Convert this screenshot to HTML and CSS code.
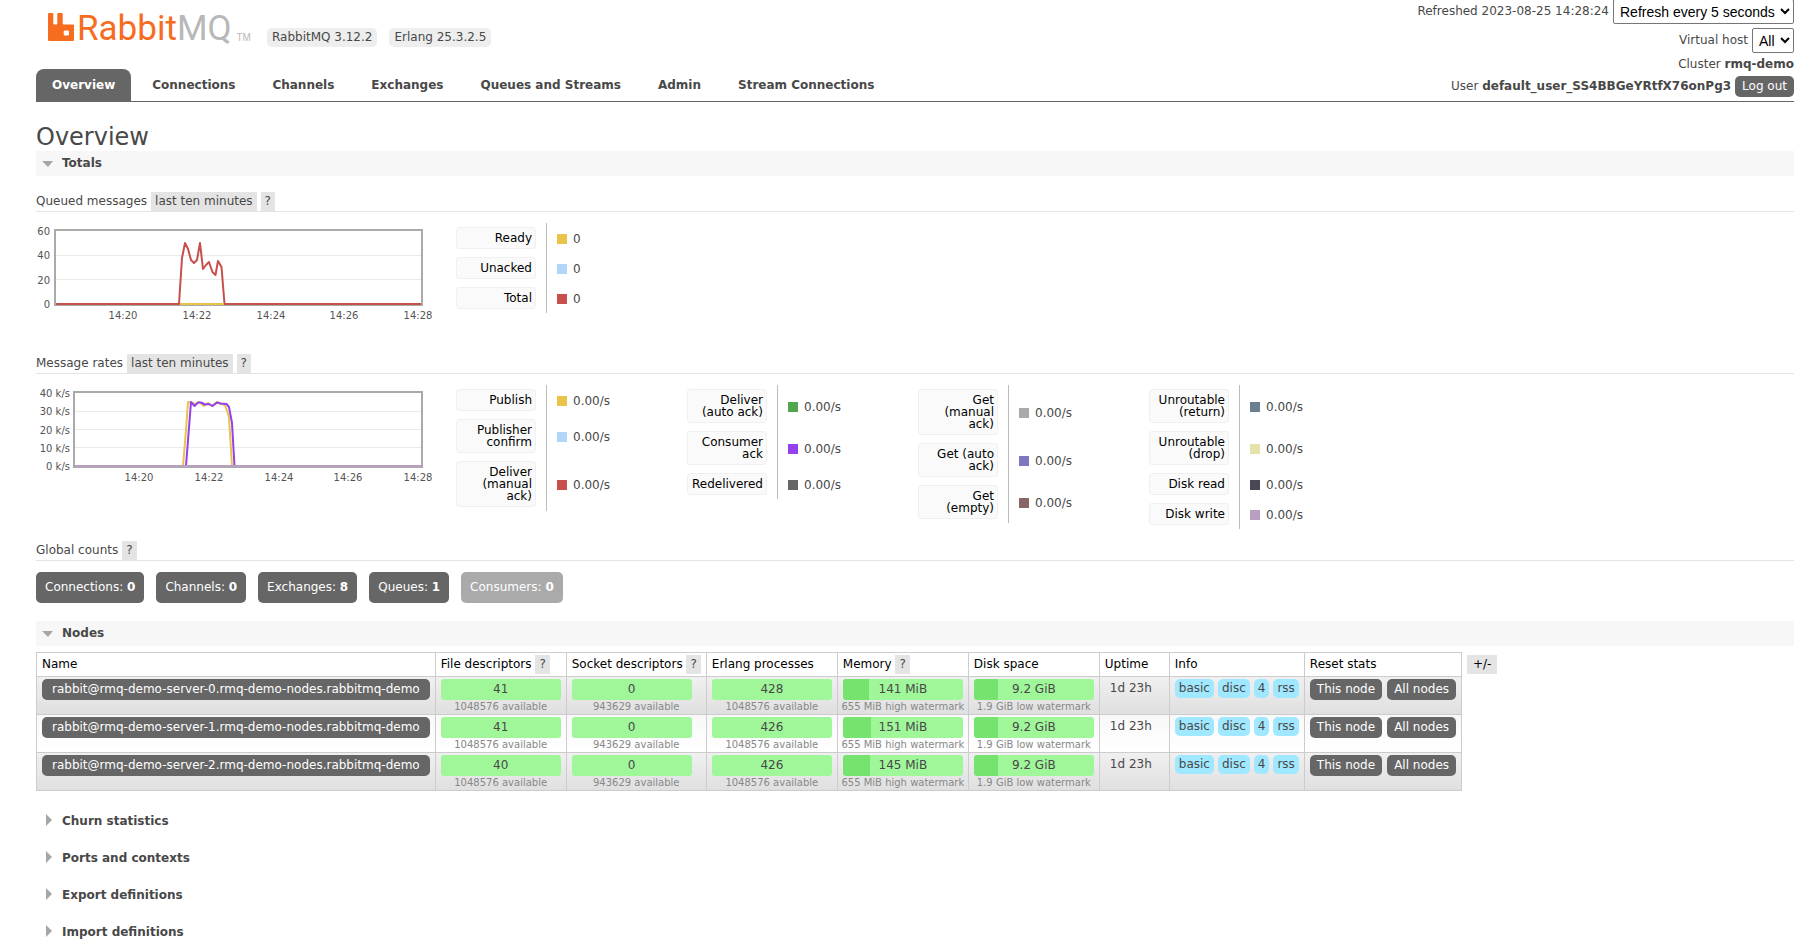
FILE: index.html
```html
<!DOCTYPE html>
<html lang="en">
<head>
<meta charset="utf-8">
<title>RabbitMQ Management</title>
<link rel="stylesheet" href="styles.css">
</head>
<body>
<header class="header">
  <div class="brand-side">
    <div class="brand">
      <a class="logo" href="#" aria-label="RabbitMQ">
        <svg class="logo-mark" width="26" height="28" viewBox="0 0 26 28" aria-hidden="true"><path fill="#f76d1f" fill-rule="evenodd" d="M1 0H4.300Q5.300 0 5.300 1V10.500Q5.300 11.500 6.300 11.500H8.300Q9.300 11.500 9.300 10.500V1Q9.300 0 10.300 0H13.700Q14.700 0 14.700 1V10.500Q14.700 11.500 15.700 11.500H25Q26 11.500 26 12.500V27Q26 28 25 28H1Q0 28 0 27V1Q0 0 1 0ZM16.700 17.500Q15.700 17.500 15.700 18.500V21.500Q15.700 22.500 16.700 22.500H20Q21 22.500 21 21.500V18.500Q21 17.500 20 17.500Z"/></svg>
        <span class="logo-text">Rabbit<span class="logo-mq">MQ</span></span><span class="logo-tm">TM</span>
      </a>
      <span class="version">RabbitMQ 3.12.2</span>
      <span class="version">Erlang 25.3.2.5</span>
    </div>
    <nav class="tabs">
      <a class="tab active" href="#">Overview</a>
      <a class="tab" href="#">Connections</a>
      <a class="tab" href="#">Channels</a>
      <a class="tab" href="#">Exchanges</a>
      <a class="tab" href="#">Queues and Streams</a>
      <a class="tab" href="#">Admin</a>
      <a class="tab" href="#">Stream Connections</a>
    </nav>
  </div>
  <div class="status">
    <div class="status-row"><label for="refresh">Refreshed 2023-08-25 14:28:24</label><select id="refresh" class="select"><option>Refresh every 5 seconds</option></select></div>
    <div class="status-row"><label for="vhost">Virtual host</label><select id="vhost" class="select"><option>All</option></select></div>
    <div class="status-row"><span>Cluster <b>rmq-demo</b></span></div>
    <div class="status-row"><span>User <b>default_user_SS4BBGeYRtfX76onPg3</b></span><button class="btn">Log out</button></div>
  </div>
</header>

<main class="main">
  <h1 class="title">Overview</h1>

  <h2 class="section open">Totals</h2>

  <h3 class="sub first">Queued messages <button class="tag">last ten minutes</button><button class="tag help">?</button></h3>
  <div class="stats">
    <svg class="chart" width="420" height="100" viewBox="36 223 420 100" role="img" aria-label="Queued messages">
      <path class="grid" d="M55 255.500H422M55 279.500H422"/>
      <rect class="frame" x="55" y="230" width="367" height="75"/>
      <path class="line red" d="M56 304H179L182 258L185 243L188 249L191 260L194 263L197 260L200 243L203 269L206 265L209 262L212.500 272L215.500 275L218 261L221.500 267L224.500 304H421"/>
      <path class="line yellow" d="M180 304H224"/>
      <g class="ylabels"><text x="50" y="235">60</text><text x="50" y="259">40</text><text x="50" y="284">20</text><text x="50" y="308">0</text></g>
      <g class="xlabels"><text x="123" y="319">14:20</text><text x="197" y="319">14:22</text><text x="271" y="319">14:24</text><text x="344" y="319">14:26</text><text x="418" y="319">14:28</text></g>
    </svg>
    <div class="legends">
      <table class="legend">
        <tr><th><button class="key">Ready</button></th><td><i class="sw" style="background:#e9c34a"></i>0</td></tr>
        <tr><th><button class="key">Unacked</button></th><td><i class="sw" style="background:#b2d6f7"></i>0</td></tr>
        <tr><th><button class="key">Total</button></th><td><i class="sw" style="background:#c74f4c"></i>0</td></tr>
      </table>
    </div>
  </div>

  <h3 class="sub">Message rates <button class="tag">last ten minutes</button><button class="tag help">?</button></h3>
  <div class="stats">
    <svg class="chart" width="420" height="100" viewBox="36 385 420 100" role="img" aria-label="Message rates">
      <path class="grid" d="M74 411.500H422M74 429.500H422M74 447.500H422"/>
      <rect class="frame" x="74" y="392" width="348" height="75"/>
      <path class="line yellow" d="M183 466L186 430L188 402L192 403L196 404L199 402L204 406L208 403L212 406L217 402L221 404L225 405L229 417L232 466"/>
      <path class="line purple" d="M186 466L191 402L194.500 406L198 402.500L201 402.500L205 404.500L209 404L212.500 406L217 402.500L220.500 403.500L226.500 404L229 407L232 423L234.500 466"/>
      <path class="line mauve" d="M75 466H421"/>
      <g class="ylabels"><text x="70" y="397">40 k/s</text><text x="70" y="415">30 k/s</text><text x="70" y="434">20 k/s</text><text x="70" y="452">10 k/s</text><text x="70" y="470">0 k/s</text></g>
      <g class="xlabels"><text x="139" y="481">14:20</text><text x="209" y="481">14:22</text><text x="279" y="481">14:24</text><text x="348" y="481">14:26</text><text x="418" y="481">14:28</text></g>
    </svg>
    <div class="legends">
      <table class="legend">
        <tr><th><button class="key">Publish</button></th><td><i class="sw" style="background:#e9c34a"></i>0.00/s</td></tr>
        <tr><th><button class="key">Publisher confirm</button></th><td><i class="sw" style="background:#b2d6f7"></i>0.00/s</td></tr>
        <tr><th><button class="key">Deliver (manual ack)</button></th><td><i class="sw" style="background:#c74f4c"></i>0.00/s</td></tr>
      </table>
      <table class="legend">
        <tr><th><button class="key">Deliver (auto ack)</button></th><td><i class="sw" style="background:#52a64f"></i>0.00/s</td></tr>
        <tr><th><button class="key">Consumer ack</button></th><td><i class="sw" style="background:#9440ed"></i>0.00/s</td></tr>
        <tr><th><button class="key">Redelivered</button></th><td><i class="sw" style="background:#666"></i>0.00/s</td></tr>
      </table>
      <table class="legend">
        <tr><th><button class="key">Get (manual ack)</button></th><td><i class="sw" style="background:#aaa"></i>0.00/s</td></tr>
        <tr><th><button class="key">Get (auto ack)</button></th><td><i class="sw" style="background:#8077c1"></i>0.00/s</td></tr>
        <tr><th><button class="key">Get (empty)</button></th><td><i class="sw" style="background:#8b6666"></i>0.00/s</td></tr>
      </table>
      <table class="legend">
        <tr><th><button class="key">Unroutable (return)</button></th><td><i class="sw" style="background:#6b7f90"></i>0.00/s</td></tr>
        <tr><th><button class="key">Unroutable (drop)</button></th><td><i class="sw" style="background:#e6e2ac"></i>0.00/s</td></tr>
        <tr><th><button class="key">Disk read</button></th><td><i class="sw" style="background:#4a4857"></i>0.00/s</td></tr>
        <tr><th><button class="key">Disk write</button></th><td><i class="sw" style="background:#b99fc1"></i>0.00/s</td></tr>
      </table>
    </div>
  </div>

  <h3 class="sub">Global counts <button class="tag help">?</button></h3>
  <div class="counts">
    <a class="count" href="#">Connections: <b>0</b></a>
    <a class="count" href="#">Channels: <b>0</b></a>
    <a class="count" href="#">Exchanges: <b>8</b></a>
    <a class="count" href="#">Queues: <b>1</b></a>
    <span class="count disabled">Consumers: <b>0</b></span>
  </div>

  <h2 class="section open">Nodes</h2>
  <div class="nodes-wrap">
    <table class="nodes">
      <thead>
        <tr>
          <th>Name</th>
          <th>File descriptors <button class="tag">?</button></th>
          <th>Socket descriptors <button class="tag">?</button></th>
          <th>Erlang processes</th>
          <th>Memory <button class="tag">?</button></th>
          <th>Disk space</th>
          <th>Uptime</th>
          <th>Info</th>
          <th>Reset stats</th>
        </tr>
      </thead>
      <tbody>
        <tr>
          <td><a class="btn node" href="#">rabbit@rmq-demo-server-0.rmq-demo-nodes.rabbitmq-demo</a></td>
          <td><div class="bar">41</div><small class="note">1048576 available</small></td>
          <td><div class="bar">0</div><small class="note">943629 available</small></td>
          <td><div class="bar">428</div><small class="note">1048576 available</small></td>
          <td><div class="bar" style="--fill:26px">141 MiB</div><small class="note">655 MiB high watermark</small></td>
          <td><div class="bar" style="--fill:24px">9.2 GiB</div><small class="note">1.9 GiB low watermark</small></td>
          <td class="uptime">1d 23h</td>
          <td><div class="pills"><span class="pill">basic</span><span class="pill">disc</span><span class="pill">4</span><span class="pill">rss</span></div></td>
          <td><div class="pills reset"><button class="btn">This node</button><button class="btn">All nodes</button></div></td>
        </tr>
        <tr>
          <td><a class="btn node" href="#">rabbit@rmq-demo-server-1.rmq-demo-nodes.rabbitmq-demo</a></td>
          <td><div class="bar">41</div><small class="note">1048576 available</small></td>
          <td><div class="bar">0</div><small class="note">943629 available</small></td>
          <td><div class="bar">426</div><small class="note">1048576 available</small></td>
          <td><div class="bar" style="--fill:28px">151 MiB</div><small class="note">655 MiB high watermark</small></td>
          <td><div class="bar" style="--fill:24px">9.2 GiB</div><small class="note">1.9 GiB low watermark</small></td>
          <td class="uptime">1d 23h</td>
          <td><div class="pills"><span class="pill">basic</span><span class="pill">disc</span><span class="pill">4</span><span class="pill">rss</span></div></td>
          <td><div class="pills reset"><button class="btn">This node</button><button class="btn">All nodes</button></div></td>
        </tr>
        <tr>
          <td><a class="btn node" href="#">rabbit@rmq-demo-server-2.rmq-demo-nodes.rabbitmq-demo</a></td>
          <td><div class="bar">40</div><small class="note">1048576 available</small></td>
          <td><div class="bar">0</div><small class="note">943629 available</small></td>
          <td><div class="bar">426</div><small class="note">1048576 available</small></td>
          <td><div class="bar" style="--fill:27px">145 MiB</div><small class="note">655 MiB high watermark</small></td>
          <td><div class="bar" style="--fill:24px">9.2 GiB</div><small class="note">1.9 GiB low watermark</small></td>
          <td class="uptime">1d 23h</td>
          <td><div class="pills"><span class="pill">basic</span><span class="pill">disc</span><span class="pill">4</span><span class="pill">rss</span></div></td>
          <td><div class="pills reset"><button class="btn">This node</button><button class="btn">All nodes</button></div></td>
        </tr>
      </tbody>
    </table>
    <button class="tag columns">+/-</button>
  </div>

  <h2 class="section closed">Churn statistics</h2>
  <h2 class="section closed">Ports and contexts</h2>
  <h2 class="section closed">Export definitions</h2>
  <h2 class="section closed last">Import definitions</h2>
</main>
</body>
</html>
```

FILE: styles.css
```css
* { box-sizing: border-box; }

body {
  margin: 0;
  padding: 0 7px 0 36px;
  background: #fff;
  color: #484848;
  font: 12px/19px Verdana, "DejaVu Sans", sans-serif;
}

a { color: inherit; text-decoration: none; }
button { border: 0; margin: 0; font: inherit; color: inherit; cursor: pointer; }

/* Header */
.header {
  display: flex;
  justify-content: space-between;
  border-bottom: 1px solid #666;
}
.brand-side { display: flex; flex-direction: column; justify-content: space-between; }
.brand { display: flex; align-items: flex-start; padding: 13px 0 0 12px; gap: 12px; }
.logo { display: flex; align-items: flex-start; margin-right: 4px; height: 40px; }
.logo-text { margin-left: 3px; color: #f76d1f; font: 400 35px/31px Roboto, sans-serif; }
.logo-mq { color: #b8b8b8; }
.logo-tm { margin: 20px 0 0 5px; color: #b8b8b8; font: 10px/10px "Liberation Sans", Arial, sans-serif; }
.version {
  margin-top: 15px;
  padding: 0 5px;
  border-radius: 5px;
  background: #eee;
}
.tabs { display: flex; gap: 5px; }
.tab {
  padding: 7px 16px 6px;
  border-radius: 8px 8px 0 0;
  font-weight: bold;
}
.tab.active { background: #666; color: #fff; }

.status { display: flex; flex-direction: column; align-items: flex-end; margin-top: -1px; padding-bottom: 4px; }
.status-row { display: flex; align-items: center; gap: 4px; min-height: 21px; }
.status-row:first-child { margin-bottom: 4px; }
.status-row:nth-child(3) { min-height: 23px; }
.select {
  height: 25px;
  padding: 0 2px;
  border: 1px solid #767676;
  border-radius: 2px;
  background-color: #fff;
  color: #000;
  font: 14px "Liberation Sans", Arial, sans-serif;
}

.btn {
  display: inline-block;
  padding: 0 7px;
  border-radius: 5px;
  background: #666;
  color: #fff;
  line-height: 21px;
  white-space: nowrap;
}
.btn.node { padding: 0 10px; }

/* Sections */
.title { margin: 21px 0 0; font-size: 24px; font-weight: normal; line-height: 28px; }
.section {
  display: flex;
  align-items: center;
  margin: 0;
  font-size: 12px;
  line-height: 25px;
}
.section::before { content: ""; border: 0 solid transparent; }
.section.open { background: #f7f7f7; }
.section.open::before {
  margin: 0 9px 0 6px;
  border-width: 6px 5px 0 6px;
  border-top-color: #a6a6a6;
}
.section.closed { margin-top: 12px; }
.section.closed.last { line-height: 24px; }
.section.closed::before {
  margin: 0 10px 3px;
  border-width: 6px 0 6px 6px;
  border-left-color: #a6a6a6;
}

.sub {
  display: flex;
  align-items: center;
  gap: 4px;
  margin: 0;
  border-bottom: 1px solid #e4e4e4;
  font-size: 12px;
  font-weight: normal;
}
.sub.first { margin-top: 16px; }
.tag { padding: 0 4px; background: #e4e4e4; line-height: 19px; }

/* Chart and legends */
.stats { display: flex; padding: 11px 0 12px; }
.chart { flex: none; margin-bottom: 19px; font-size: 10px; }
.chart text { fill: #545454; }
.grid { fill: none; stroke: #eaeaea; }
.frame { fill: none; stroke: #aaa; stroke-width: 2; }
.line { fill: none; stroke-width: 2; stroke-linejoin: round; }
.yellow { stroke: #e9c34a; }
.red { stroke: #c74f4c; }
.purple { stroke: #9440ed; }
.mauve { stroke: #b99fc1; }
.ylabels { text-anchor: end; }
.xlabels { text-anchor: middle; }

.legends { display: flex; align-items: flex-start; gap: 36px; }
.legend { width: 195px; border-collapse: collapse; }
.legend th { width: 90px; padding: 4px 10px 4px 0; border-right: 1px solid #bbb; font-weight: normal; }
.legend td { padding: 2px 0 0 10px; }
.key {
  display: block;
  width: 80px;
  padding: 4px 3px;
  border: 1px solid #f0f0f0;
  border-radius: 3px;
  background: #fafafa;
  color: #000;
  line-height: 12px;
  text-align: right;
}
.sw { display: inline-block; width: 10px; height: 10px; margin-right: 6px; vertical-align: -1px; }

/* Counts */
.counts { display: flex; gap: 12px; padding: 11px 0 18px; }
.count { padding: 6px 9px; border-radius: 5px; background: #666; color: #fff; }
.count.disabled { background: #aaa; }

/* Nodes table */
.nodes-wrap { display: flex; align-items: flex-start; gap: 5px; padding: 6px 0; }
.nodes { border-collapse: collapse; }
.nodes th, .nodes td { border: 1px solid #ccc; vertical-align: top; text-align: left; }
.nodes th { padding: 2px 5px; color: #000; font-weight: normal; white-space: nowrap; }
.nodes th .tag { color: #484848; }
.nodes td { padding: 2px 5px 0; }
.nodes tbody tr { height: 38px; background: linear-gradient(#f0f0f0, #dfdfdf); }
.nodes tbody tr:nth-child(even) { background: linear-gradient(#f8f8f8, #fff); }
.bar {
  width: 120px;
  border-radius: 3px;
  background: linear-gradient(90deg, #76e36e var(--fill, 0px), #a0f79a var(--fill, 0px));
  line-height: 21px;
  text-align: center;
}
.note { display: block; margin: 0 -5px; color: #888; font-size: 10px; line-height: 13px; text-align: center; white-space: nowrap; }
.nodes .uptime { padding: 2px 17px 0 10px; }
.pills { display: flex; gap: 4px; }
.pills.reset { gap: 5px; }
.pill { padding: 0 4px; border-radius: 5px; background: #a0e8ff; }
.columns { margin-top: 3px; padding: 0 6px; color: #000; }
```
